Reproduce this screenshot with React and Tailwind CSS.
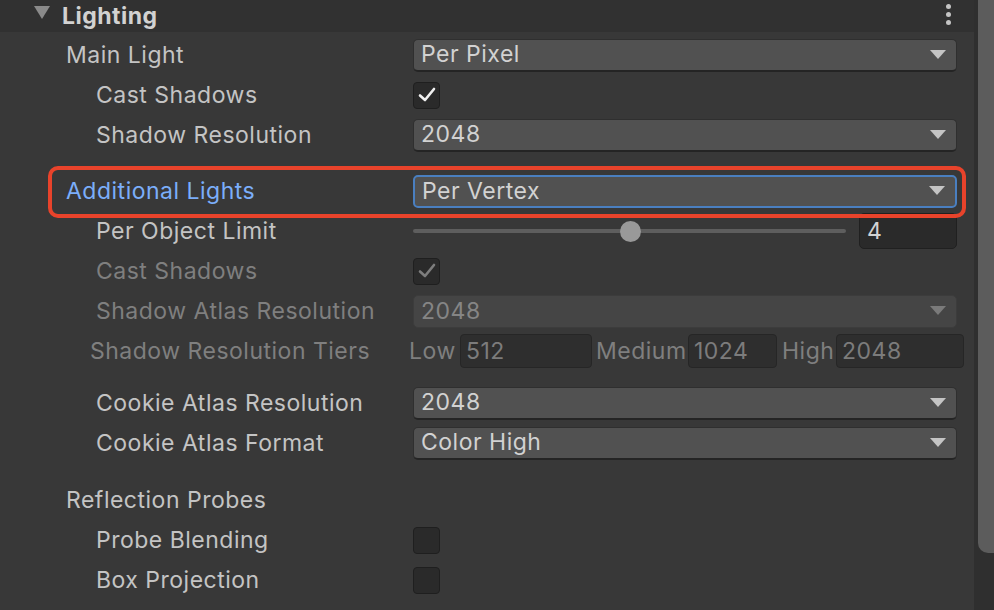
import React from "react";

const font = { fontFamily: "Inter, 'Noto Sans', sans-serif" };

function Arrow({ dim }) {
  return (
    <svg width="16" height="10" viewBox="0 0 16 10" className="shrink-0">
      <polygon points="0,0 16,0 8,9" fill={dim ? "#7a7a7a" : "#c4c4c4"} />
    </svg>
  );
}

function Dropdown({ value, focused, dim }) {
  const base = "flex items-center justify-between h-[33px] rounded-[5px] pl-[7px] pr-[10px] text-[23px] tracking-[0.5px]";
  let cls;
  if (focused) cls = "bg-[#515151] border-2 border-[#4a7fc0] text-[#d2d2d2]";
  else if (dim) cls = "bg-[#454545] border border-[#3c3c3c] text-[#858585]";
  else cls = "bg-[#515151] border border-[#2f2f2f] border-b-[#242424] border-b-2 text-[#d2d2d2]";
  return (
    <div className={`${base} ${cls}`}>
      <span>{value}</span>
      <Arrow dim={dim} />
    </div>
  );
}

function Checkbox({ checked, dim }) {
  return (
    <div className="w-[27px] h-[27px] rounded-[4px] bg-[#2a2a2a] border border-[#1f1f1f] flex items-center justify-center">
      {checked && (
        <svg width="18" height="16" viewBox="0 0 18 16">
          <polyline
            points="2,8.5 7,13 16,2"
            fill="none"
            stroke={dim ? "#7d7d7d" : "#f0f0f0"}
            strokeWidth="2.6"
            strokeLinecap="round"
            strokeLinejoin="round"
          />
        </svg>
      )}
    </div>
  );
}

function Row({ label, indent = 96, labelColor = "text-[#c4c4c4]", children, h = "h-[40px]" }) {
  return (
    <div className={`flex items-center ${h}`}>
      <div className={`w-[413px] shrink-0 text-[23px] tracking-[0.5px] ${labelColor}`} style={{ paddingLeft: indent }}>
        {label}
      </div>
      <div className="flex-1 pr-[17px]">{children}</div>
    </div>
  );
}

function TierField({ value, w }) {
  return (
    <div className={`${w} h-[34px] rounded-[4px] bg-[#2e2e2e] border border-[#262626] flex items-center pl-[5px] text-[#7c7c7c]`}>
      {value}
    </div>
  );
}

export default function App() {
  return (
    <div className="w-[994px] h-[610px] overflow-hidden bg-[#383838] flex" style={font}>
      <div className="relative w-[974px] shrink-0 flex flex-col">
        {/* header */}
        <div className="h-[32px] bg-[#313131] flex items-center relative">
          <svg width="16" height="14" viewBox="0 0 16 14" className="ml-[34px] mb-[6px]">
            <polygon points="0,0 16,0 8,13" fill="#8a8a8a" />
          </svg>
          <span className="ml-[12px] text-[23px] tracking-[0.5px] font-bold text-[#d2d2d2] leading-none">Lighting</span>
          <div className="ml-auto mr-[23px] flex flex-col gap-[3px] -mt-[4px]">
            <div className="w-[5px] h-[5px] rounded-full bg-[#c4c4c4]" />
            <div className="w-[5px] h-[5px] rounded-full bg-[#c4c4c4]" />
            <div className="w-[5px] h-[5px] rounded-full bg-[#c4c4c4]" />
          </div>
        </div>
        <div className="h-[3px]" />

        <Row label="Main Light" indent={66}>
          <Dropdown value="Per Pixel" />
        </Row>
        <Row label="Cast Shadows">
          <Checkbox checked />
        </Row>
        <Row label="Shadow Resolution">
          <Dropdown value="2048" />
        </Row>
        <div className="h-[16px]" />
        <Row label="Additional Lights" indent={66} labelColor="text-[#7baefa]">
          <Dropdown value="Per Vertex" focused />
        </Row>
        <Row label="Per Object Limit">
          <div className="flex items-center gap-[13px]">
            <div className="relative flex-1 h-[20px] flex items-center">
              <div className="w-full h-[4px] rounded-full bg-[#5e5e5e]" />
              <div className="absolute left-[207px] w-[21px] h-[21px] rounded-full bg-[#999999]" />
            </div>
            <div className="w-[98px] h-[36px] rounded-[5px] bg-[#2a2a2a] border border-[#202020] flex items-center pl-[7px] text-[23px] text-[#d2d2d2]">
              4
            </div>
          </div>
        </Row>
        <Row label="Cast Shadows" labelColor="text-[#7f7f7f]">
          <Checkbox checked dim />
        </Row>
        <Row label="Shadow Atlas Resolution" labelColor="text-[#7f7f7f]">
          <Dropdown value="2048" dim />
        </Row>
        <div className="flex items-center h-[40px] text-[23px] tracking-[0.5px] text-[#7f7f7f]">
          <div className="w-[409px] shrink-0 pl-[90px]">Shadow Resolution Tiers</div>
          <div className="flex items-center">
            <span className="w-[51px]">Low</span>
            <TierField value="512" w="w-[132px]" />
            <span className="ml-[4px] w-[92px]">Medium</span>
            <TierField value="1024" w="w-[89px]" />
            <span className="ml-[5px] w-[54px]">High</span>
            <TierField value="2048" w="w-[128px]" />
          </div>
        </div>
        <div className="h-[12px]" />
        <Row label="Cookie Atlas Resolution">
          <Dropdown value="2048" />
        </Row>
        <Row label="Cookie Atlas Format">
          <Dropdown value="Color High" />
        </Row>
        <div className="h-[17px]" />
        <Row label="Reflection Probes" indent={66}>
          <div />
        </Row>
        <Row label="Probe Blending">
          <Checkbox />
        </Row>
        <Row label="Box Projection">
          <Checkbox />
        </Row>

        {/* annotation */}
        <div className="absolute left-[48px] top-[166px] w-[918px] h-[52px] rounded-[10px] border-[4px] border-[#e8432b] pointer-events-none" />
      </div>
      {/* scrollbar */}
      <div className="w-[20px] shrink-0 bg-[#2f2f2f] flex">
        <div className="ml-[4px] flex-1 h-[553px] bg-[#5c5c5c] rounded-bl-[10px]" />
      </div>
    </div>
  );
}
